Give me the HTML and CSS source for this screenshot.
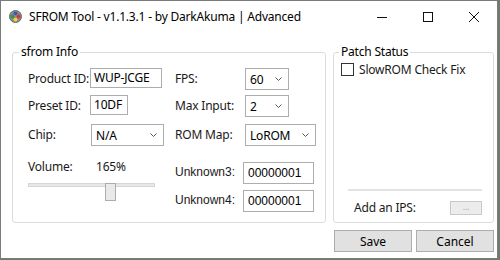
FILE: index.html
```html
<!DOCTYPE html>
<html lang="en">
<head>
    <meta charset="UTF-8">
    <meta name="viewport" content="width=device-width, initial-scale=1.0">
    <title>SFROM Tool</title>
    <link rel="stylesheet" href="styles.css">
</head>
<body>
    <div class="window">
        <div class="titlebar">
            <svg class="app-icon" viewBox="0 0 13 13">
                <circle cx="6.5" cy="6.5" r="6" fill="#8c8c8c" stroke="#6a6a6a"/>
                <circle cx="6.5" cy="3.4" r="1.9" fill="#3557c9"/>
                <circle cx="9.6" cy="6.5" r="1.9" fill="#d8343a"/>
                <circle cx="6.5" cy="9.6" r="1.9" fill="#f2d72a"/>
                <circle cx="3.4" cy="6.5" r="1.9" fill="#2f9a45"/>
            </svg>
            <span class="title">SFROM Tool - v1.1.3.1 - by DarkAkuma | Advanced</span>
            <div class="caption">
                <span class="cap-btn">
                    <svg width="10" height="10" viewBox="0 0 10 10"><path d="M0 5.5h10" stroke="#111" stroke-width="1"/></svg>
                </span>
                <span class="cap-btn">
                    <svg width="10" height="10" viewBox="0 0 10 10"><rect x="0.5" y="0.5" width="9" height="9" fill="none" stroke="#111" stroke-width="1"/></svg>
                </span>
                <span class="cap-btn">
                    <svg width="10" height="10" viewBox="0 0 10 10"><path d="M0 0L10 10M10 0L0 10" stroke="#111" stroke-width="1"/></svg>
                </span>
            </div>
        </div>

        <div class="content">
            <div class="groups">
                <fieldset class="group info">
                    <legend>sfrom Info</legend>
                    <div class="info-grid">
                        <span class="label">Product ID:</span>
                        <span class="textbox w-product">WUP-JCGE</span>
                        <span class="label">FPS:</span>
                        <span class="combo w-small">60 <svg class="chev" viewBox="0 0 7 4"><path d="M0.5 0.5L3.5 3.5L6.5 0.5" fill="none" stroke="#555"/></svg></span>

                        <span class="label">Preset ID:</span>
                        <span class="textbox w-preset">10DF</span>
                        <span class="label">Max Input:</span>
                        <span class="combo w-small">2 <svg class="chev" viewBox="0 0 7 4"><path d="M0.5 0.5L3.5 3.5L6.5 0.5" fill="none" stroke="#555"/></svg></span>

                        <span class="label">Chip:</span>
                        <span class="combo w-chip">N/A <svg class="chev" viewBox="0 0 7 4"><path d="M0.5 0.5L3.5 3.5L6.5 0.5" fill="none" stroke="#555"/></svg></span>
                        <span class="label">ROM Map:</span>
                        <span class="combo w-map">LoROM <svg class="chev" viewBox="0 0 7 4"><path d="M0.5 0.5L3.5 3.5L6.5 0.5" fill="none" stroke="#555"/></svg></span>

                        <div class="volume">
                            <div class="volume-head">
                                <span class="volume-label">Volume:</span>
                                <span>165%</span>
                            </div>
                            <div class="slider">
                                <span class="track"></span>
                                <span class="thumb" style="left: 77px;"></span>
                            </div>
                        </div>
                        <span class="label sans">Unknown3:</span>
                        <span class="textbox sans w-unk">00000001</span>

                        <span class="label sans">Unknown4:</span>
                        <span class="textbox sans w-unk">00000001</span>
                    </div>
                </fieldset>

                <fieldset class="group patch">
                    <legend>Patch Status</legend>
                    <div class="check-row">
                        <span class="checkbox"></span>
                        <span>SlowROM Check Fix</span>
                    </div>
                    <div class="separator"></div>
                    <div class="ips-row">
                        <span>Add an IPS:</span>
                        <span class="ips-btn">...</span>
                    </div>
                </fieldset>
            </div>

            <div class="actions">
                <button>Save</button>
                <button>Cancel</button>
            </div>
        </div>
    </div>
</body>
</html>
```

FILE: styles.css
```css
body {
    margin: 0;
    background-color: #6f7d68;
    font-family: "Noto Sans", sans-serif;
    font-size: 12px;
    letter-spacing: -0.2px;
    color: #1a1a1a;
}
.window {
    width: 496px;
    height: 257px;
    border: 1px solid #7b7b7b;
    background-color: white;
    display: flex;
    flex-direction: column;
}
.titlebar {
    height: 31px;
    display: flex;
    align-items: center;
}
.app-icon {
    width: 13px;
    height: 13px;
    margin-left: 8px;
    margin-right: 7px;
}
.title {
    flex: 1;
    color: #000;
}
.caption {
    display: flex;
    height: 31px;
}
.cap-btn {
    width: 46px;
    display: flex;
    align-items: center;
    justify-content: center;
}
.content {
    padding: 13px 3px 0 11px;
}
.groups {
    display: flex;
    gap: 7px;
}
.group {
    margin: 0;
    min-width: 0;
    box-sizing: border-box;
    border: 1px solid #dcdcdc;
    border-radius: 3px;
    padding: 9px 0 10px 6px;
}
.group legend {
    padding: 0 2px;
    line-height: 14px;
    color: #000;
}
.info {
    width: 314px;
}
.patch {
    width: 161px;
    display: flex;
    flex-direction: column;
    padding: 2px 0 6px 5px;
}
.info-grid {
    display: grid;
    grid-template-columns: 62px 85px 68px auto;
    grid-template-rows: 27px 29px 38px 28px 22px;
    align-items: start;
    margin-left: 9px;
}
.label {
    line-height: 21px;
    white-space: nowrap;
}
.sans {
    font-family: "Liberation Sans", Arial, sans-serif;
    letter-spacing: 0;
}
.textbox,
.combo {
    box-sizing: border-box;
    border: 1px solid #adadad;
    background-color: white;
    color: #000;
    height: 20px;
    line-height: 18px;
    padding-left: 3px;
    white-space: nowrap;
}
.combo {
    display: flex;
    justify-content: space-between;
    align-items: center;
    height: 22px;
    padding: 2px 6px 0 4px;
    margin-left: 2px;
}
.chev {
    width: 7px;
    height: 4px;
    margin-top: -3px;
}
.w-product { width: 72px; }
.w-preset { width: 38px; }
.w-chip { width: 73px; margin-left: 1px; }
.w-small { width: 44px; }
.w-map { width: 71px; }
.w-unk {
    width: 71px;
    height: 22px;
    line-height: 20px;
    padding-left: 4px;
}
.volume {
    grid-column: 1 / 3;
    grid-row: 4 / 6;
}
.volume-head {
    display: flex;
    line-height: 14px;
    margin-top: -2px;
}
.volume-label {
    width: 68px;
}
.slider {
    position: relative;
    width: 127px;
    height: 18px;
    margin-top: 9px;
}
.track {
    display: block;
    height: 2px;
    margin-top: 7px;
    border: 1px solid #d6d6d6;
    background-color: #e7e7e7;
}
.thumb {
    position: absolute;
    top: 0;
    width: 9px;
    height: 16px;
    border: 1px solid #acacac;
    background-color: #e9e9e9;
}
.check-row {
    display: flex;
    align-items: center;
    margin-left: 2px;
}
.checkbox {
    width: 11px;
    height: 11px;
    border: 1px solid #333;
    margin-right: 5px;
}
.separator {
    border-top: 2px solid #e3e3e3;
    margin: auto 11px 0 9px;
}
.ips-row {
    display: flex;
    justify-content: space-between;
    align-items: center;
    margin: 8px 11px 0 15px;
}
.ips-btn {
    width: 30px;
    height: 12px;
    border: 1px solid #c9c9c9;
    background-color: #ececec;
    color: #a8a8a8;
    font-size: 9px;
    line-height: 10px;
    text-align: center;
}
.actions {
    display: flex;
    justify-content: flex-end;
    gap: 4px;
    margin-top: 7px;
}
button {
    width: 78px;
    height: 22px;
    padding: 0;
    border: 1px solid #adadad;
    background-color: #e1e1e1;
    font-family: "Noto Sans", sans-serif;
    font-size: 12px;
    color: #000;
}
```
